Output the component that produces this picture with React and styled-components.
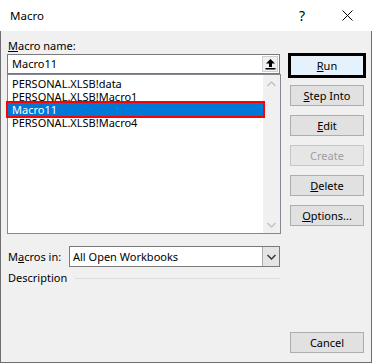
import React from 'react'
import styled, { createGlobalStyle } from 'styled-components'

const GlobalStyle = createGlobalStyle`
  body {
    margin: 0;
    font-family: "Noto Sans", "Open Sans", sans-serif;
    font-size: 11px;
    color: #000;
  }
`

const macros = ['PERSONAL.XLSB!data', 'PERSONAL.XLSB!Macro1', 'Macro11', 'PERSONAL.XLSB!Macro4']

const buttons = [
    { key: 'run', mn: 'R', rest: 'un', def: true },
    { key: 'step', mn: 'S', rest: 'tep Into' },
    { key: 'edit', mn: 'E', rest: 'dit' },
    { key: 'create', mn: '', rest: 'Create', disabled: true },
    { key: 'delete', mn: 'D', rest: 'elete' },
    { key: 'options', mn: 'O', rest: 'ptions...' },
]

const Chevron = ({ up, color }) => (
    <svg width="9" height="6" viewBox="0 0 9 6">
        <path d={up ? 'M0.5 5 L4.5 1 L8.5 5' : 'M0.5 1 L4.5 5 L8.5 1'} fill="none" stroke={color} strokeWidth="1.4" />
    </svg>
)

const App = () => {
    return (
        <Window>
            <GlobalStyle />
            <TitleBar>
                <Title>Macro</Title>
                <Help>?</Help>
                <Close>
                    <svg width="11" height="11" viewBox="0 0 11 11">
                        <path d="M0.5 0.5 L10.5 10.5 M10.5 0.5 L0.5 10.5" stroke="#000" strokeWidth="1" fill="none" />
                    </svg>
                </Close>
            </TitleBar>
            <Body>
                <LeftCol>
                    <Label><u>M</u>acro name:</Label>
                    <NameInput>
                        <NameText>Macro11</NameText>
                        <UploadBtn>
                            <svg width="11" height="12" viewBox="0 0 11 12">
                                <path d="M5.5 1 L10 5.5 L7 5.5 L7 9 L4 9 L4 5.5 L1 5.5 Z" fill="#000" />
                                <rect x="0.5" y="10" width="10" height="1.5" fill="#000" />
                            </svg>
                        </UploadBtn>
                    </NameInput>
                    <List>
                        <Items>
                            {macros.map((m) => (
                                <Item key={m} selected={m === 'Macro11'}>{m}</Item>
                            ))}
                        </Items>
                        <ScrollBar>
                            <ScrollArrow><Chevron up color="#c2c2c2" /></ScrollArrow>
                            <ScrollArrow><Chevron color="#c2c2c2" /></ScrollArrow>
                        </ScrollBar>
                    </List>
                    <MacrosRow>
                        <RowLabel>M<u>a</u>cros in:</RowLabel>
                        <Dropdown>
                            <DropText>All Open Workbooks</DropText>
                            <DropArrow><Chevron color="#333" /></DropArrow>
                        </Dropdown>
                    </MacrosRow>
                    <DescRow>
                        <span>Description</span>
                        <Rule />
                    </DescRow>
                </LeftCol>
                <RightCol>
                    {buttons.map((b) => (
                        <Button key={b.key} isDefault={b.def} disabled={b.disabled}>
                            {b.mn && <u>{b.mn}</u>}{b.rest}
                        </Button>
                    ))}
                    <CancelButton>Cancel</CancelButton>
                </RightCol>
            </Body>
        </Window>
    )
}

const Window = styled.div`
  width: 372px;
  height: 363px;
  display: flex;
  flex-direction: column;
  box-sizing: border-box;
  overflow: hidden;
`
const TitleBar = styled.div`
  height: 31px;
  background: #fff;
  display: flex;
  align-items: center;
  padding-left: 10px;
  flex-shrink: 0;
`
const Title = styled.div`
  flex: 1;
  font-size: 11.5px;
  line-height: 16px;
`
const Help = styled.div`
  width: 12px;
  font-size: 14px;
  margin-right: 34px;
  text-align: center;
`
const Close = styled.div`
  display: flex;
  margin-right: 19px;
`
const Body = styled.div`
  flex: 1;
  background: #f0f0f0;
  border: 1px solid #6f6f6f;
  border-top: none;
  display: grid;
  grid-template-columns: 274px 74px;
  column-gap: 9px;
  padding: 7px 6px 9px 6px;
`
const LeftCol = styled.div`
  display: flex;
  flex-direction: column;
`
const Label = styled.div`
  line-height: 16px;
  height: 16px;
  padding-left: 1px;
`
const NameInput = styled.div`
  height: 20px;
  box-sizing: border-box;
  width: 273px;
  border: 1px solid #7a7a7a;
  background: #fff;
  display: flex;
`
const NameText = styled.div`
  flex: 1;
  padding-left: 4px;
  line-height: 18px;
`
const UploadBtn = styled.div`
  width: 16px;
  margin: 1px;
  box-sizing: border-box;
  border: 1px solid #cfcfcf;
  background: #f0f0f0;
  display: flex;
  align-items: center;
  justify-content: center;
`
const List = styled.div`
  height: 160px;
  box-sizing: border-box;
  border: 1px solid #828790;
  background: #fff;
  display: flex;
`
const Items = styled.div`
  flex: 1;
  padding-top: 2px;
`
const Item = styled.div`
  height: 13px;
  line-height: 13px;
  padding-left: 4px;
  white-space: nowrap;
  background: ${(p) => (p.selected ? '#0078d7' : 'transparent')};
  color: ${(p) => (p.selected ? '#fff' : '#000')};
  outline: ${(p) => (p.selected ? '2px solid #ff0000' : 'none')};
  position: relative;
`
const ScrollBar = styled.div`
  width: 17px;
  background: #f0f0f0;
  display: flex;
  flex-direction: column;
  justify-content: space-between;
`
const ScrollArrow = styled.div`
  height: 17px;
  display: flex;
  align-items: center;
  justify-content: center;
`
const MacrosRow = styled.div`
  display: flex;
  align-items: center;
  margin-top: 12px;
`
const RowLabel = styled.div`
  width: 61px;
  padding-left: 1px;
`
const Dropdown = styled.div`
  width: 211px;
  height: 21px;
  box-sizing: border-box;
  border: 1px solid #7a7a7a;
  background: #fff;
  display: flex;
`
const DropText = styled.div`
  flex: 1;
  padding-left: 3px;
  line-height: 19px;
`
const DropArrow = styled.div`
  width: 16px;
  background: #e5e5e5;
  border-left: 1px solid #adadad;
  display: flex;
  align-items: center;
  justify-content: center;
`
const DescRow = styled.div`
  display: flex;
  align-items: center;
  margin-top: 3px;
  padding-left: 1px;
  line-height: 16px;
`
const Rule = styled.div`
  flex: 1;
  height: 1px;
  background: #dcdcdc;
  margin-left: 8px;
  margin-right: 1px;
`
const RightCol = styled.div`
  display: flex;
  flex-direction: column;
  gap: 9px;
  padding-top: 17px;
`
const Button = styled.div`
  height: 21px;
  box-sizing: border-box;
  display: flex;
  align-items: center;
  justify-content: center;
  border: 1px solid ${(p) => (p.isDefault ? '#000' : p.disabled ? '#c6c6c6' : '#adadad')};
  box-shadow: ${(p) => (p.isDefault ? '0 0 0 2px #000' : 'none')};
  background: ${(p) => (p.isDefault ? '#e5f1fb' : p.disabled ? '#e6e6e6' : '#e1e1e1')};
  color: ${(p) => (p.disabled ? '#a0a0a0' : '#000')};
`
const CancelButton = styled(Button)`
  margin-top: auto;
`

export default App
